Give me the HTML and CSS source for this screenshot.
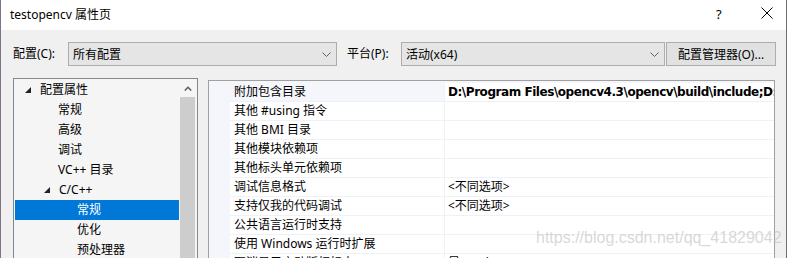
FILE: index.html
```html
<!DOCTYPE html>
<html lang="zh">
<head>
<meta charset="utf-8">
<title>testopencv 属性页</title>
<link rel="stylesheet" href="styles.css">
</head>
<body>
<div class="window">
  <div class="titlebar">
    <span class="title">testopencv 属性页</span>
    <span class="help">?</span>
    <span class="close">
      <svg width="12" height="12" viewBox="0 0 12 12"><path d="M0.5 0.5 L11.5 11.5 M11.5 0.5 L0.5 11.5" stroke="#000" stroke-width="1" fill="none"/></svg>
    </span>
  </div>
  <div class="content">
    <div class="config-row">
      <span class="label label-config">配置(C):</span>
      <div class="combo combo-config">
        <span>所有配置</span>
        <svg class="chev" width="9" height="5" viewBox="0 0 9 5"><path d="M0.5 0.5 L4.5 4.5 L8.5 0.5" stroke="#606060" fill="none"/></svg>
      </div>
      <span class="label label-platform">平台(P):</span>
      <div class="combo combo-platform">
        <span>活动(x64)</span>
        <svg class="chev" width="9" height="5" viewBox="0 0 9 5"><path d="M0.5 0.5 L4.5 4.5 L8.5 0.5" stroke="#606060" fill="none"/></svg>
      </div>
      <button class="btn">配置管理器(O)...</button>
    </div>
    <div class="main">
      <div class="tree">
        <div class="tree-items">
          <div class="item l1"><svg class="tri" width="6" height="6" viewBox="0 0 6 6"><polygon points="6,0 6,6 0,6" fill="#222"/></svg>配置属性</div>
          <div class="item l2">常规</div>
          <div class="item l2">高级</div>
          <div class="item l2">调试</div>
          <div class="item l2">VC++ 目录</div>
          <div class="item l2b"><svg class="tri" width="6" height="6" viewBox="0 0 6 6"><polygon points="6,0 6,6 0,6" fill="#222"/></svg>C/C++</div>
          <div class="item l3 selected">常规</div>
          <div class="item l3">优化</div>
          <div class="item l3">预处理器</div>
        </div>
        <div class="scrollbar">
          <div class="sb-arrow">
            <svg width="8" height="5" viewBox="0 0 8 5"><path d="M0.8 4.5 L4 1.3 L7.2 4.5" stroke="#606060" stroke-width="1.6" fill="none"/></svg>
          </div>
          <div class="sb-thumb"></div>
        </div>
      </div>
      <div class="grid">
        <div class="row first"><div class="name">附加包含目录</div><div class="value bold">D:\Program Files\opencv4.3\opencv\build\include;D:\Program Files\opencv4.3\opencv\build\include\opencv2</div></div>
        <div class="row"><div class="name">其他 #using 指令</div><div class="value"></div></div>
        <div class="row"><div class="name">其他 BMI 目录</div><div class="value"></div></div>
        <div class="row"><div class="name">其他模块依赖项</div><div class="value"></div></div>
        <div class="row"><div class="name">其他标头单元依赖项</div><div class="value"></div></div>
        <div class="row"><div class="name">调试信息格式</div><div class="value">&lt;不同选项&gt;</div></div>
        <div class="row"><div class="name">支持仅我的代码调试</div><div class="value">&lt;不同选项&gt;</div></div>
        <div class="row"><div class="name">公共语言运行时支持</div><div class="value"></div></div>
        <div class="row"><div class="name">使用 Windows 运行时扩展</div><div class="value"></div></div>
        <div class="row"><div class="name">取消显示启动版权标志</div><div class="value">是 (/nologo)</div></div>
      </div>
    </div>
  </div>
  <div class="watermark">https://blog.csdn.net/qq_41829042</div>
</div>
</body>
</html>
```

FILE: styles.css
```css
html, body {
  margin: 0;
  padding: 0;
}
body {
  width: 788px;
  height: 258px;
  overflow: hidden;
  background: #ffffff;
  font-family: "Noto Sans", "Noto Sans CJK SC", sans-serif;
  font-size: 12px;
  color: #000;
}
.window {
  position: relative;
  width: 785px;
  height: 258px;
  border-left: 1px solid #7e7389;
  border-right: 1px solid #6f6f6f;
  background: #f0f0f0;
  overflow: hidden;
}
.titlebar {
  height: 30px;
  background: #fff;
  display: flex;
  align-items: center;
}
.title {
  padding-left: 9px;
  flex: 1;
  line-height: 16px;
  margin-top: -1px;
}
.help {
  width: 12px;
  margin-right: 33px;
  font-size: 13px;
  margin-top: -3px;
}
.close {
  width: 12px;
  height: 12px;
  margin-right: 13px;
  margin-top: -4px;
  display: flex;
}
.content {
  padding: 12px 0 0 12px;
}
.config-row {
  display: flex;
  align-items: center;
  height: 24px;
}
.label {
  line-height: 16px;
}
.label-config {
  width: 55px;
}
.label-platform {
  margin-left: 10px;
  width: 54px;
}
.combo {
  height: 22px;
  border: 1px solid #adadad;
  background: #e5e5e5;
  display: flex;
  align-items: center;
  padding-left: 4px;
  box-sizing: content-box;
}
.combo span {
  flex: 1;
}
.combo .chev {
  margin-right: 5px;
}
.combo-config {
  width: 263px;
}
.combo-platform {
  width: 258px;
}
.btn {
  margin-left: 1px;
  width: 110px;
  height: 24px;
  border: 1px solid #adadad;
  background: #e1e1e1;
  font: inherit;
  color: #000;
  padding: 0;
  text-align: center;
}
.main {
  display: flex;
  align-items: flex-start;
  margin-top: 12px;
}
.tree {
  flex-shrink: 0;
  width: 183px;
  height: 200px;
  border: 1px solid #828790;
  background: #f5f5f5;
  display: flex;
}
.tree-items {
  flex: 1;
  padding: 1px 1px 0 1px;
}
.item {
  height: 20px;
  line-height: 20px;
  display: flex;
  align-items: center;
  white-space: nowrap;
}
.item .tri {
  margin-right: 9px;
}
.l1 {
  padding-left: 10px;
}
.l2 {
  padding-left: 43px;
}
.l2b {
  padding-left: 29px;
}
.l3 {
  padding-left: 62px;
}
.selected {
  background: #0078d7;
  color: #fff;
}
.scrollbar {
  width: 17px;
  display: flex;
  flex-direction: column;
}
.sb-arrow {
  height: 18px;
  display: flex;
  align-items: center;
  justify-content: center;
  margin-right: 2px;
}
.sb-thumb {
  flex: 1;
  background: #cdcdcd;
  margin-right: 2px;
}
.grid {
  flex-shrink: 0;
  margin-left: 10px;
  margin-top: 2px;
  width: 544px;
  height: 200px;
  border: 1px solid #a0a0a0;
  background: #f4f6fb;
  padding-top: 2px;
  padding-left: 21px;
  box-sizing: content-box;
  overflow: hidden;
}
.row {
  display: flex;
  height: 18px;
  border-bottom: 1px solid #edf1f8;
  background: #fff;
}
.name {
  flex-shrink: 0;
  width: 210px;
  padding-left: 4px;
  line-height: 18px;
  border-right: 1px solid #edf1f8;
  white-space: nowrap;
}
.row.first .name {
  background: #f4f6fb;
}
.value {
  flex: 1;
  min-width: 0;
  padding-left: 3px;
  line-height: 18px;
  white-space: nowrap;
  overflow: hidden;
}
.bold {
  font-family: "DejaVu Sans", "Noto Sans CJK SC", sans-serif;
  font-weight: bold;
  font-size: 12px;
  letter-spacing: -0.45px;
}
.watermark {
  position: absolute;
  left: 535px;
  top: 229px;
  font-family: "Liberation Sans", Arial, sans-serif;
  font-size: 16px;
  color: rgba(190, 190, 190, 0.6);
  white-space: nowrap;
}
```
